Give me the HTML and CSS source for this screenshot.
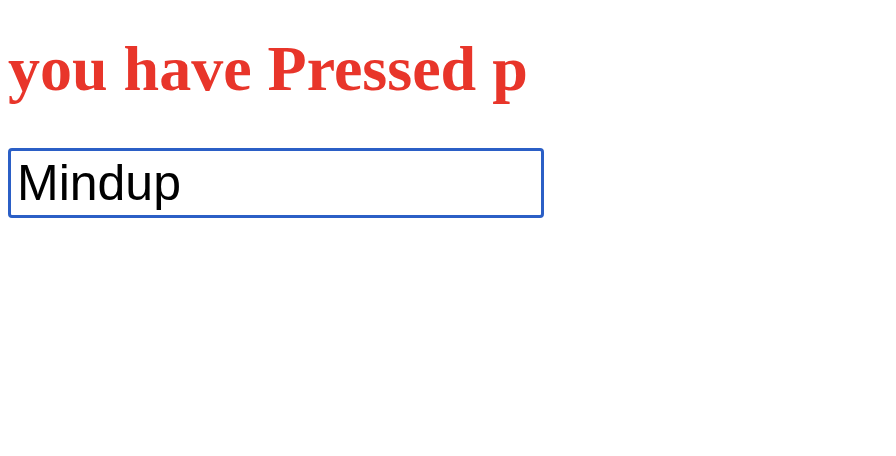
FILE: index.html
```html
<!DOCTYPE html>
<html>
<head>
<meta charset="utf-8">
<link rel="stylesheet" href="styles.css">
</head>
<body>
<h1 class="title">you have Pressed p</h1>
<input class="field" type="text" value="Mindup">
</body>
</html>
```
FILE: styles.css
```css
body {
  margin: 8px;
  font-family: "Liberation Serif", serif;
  background: #fff;
}
.title {
  color: #e8352a;
  font-family: "Liberation Serif", serif;
  font-weight: bold;
  font-size: 64px;
  line-height: 1.15;
  margin: 0 0 42px;
  padding-top: 24px;
}
.field {
  display: block;
  box-sizing: border-box;
  width: 536px;
  height: 70px;
  border: 3px solid #2b5fc6;
  border-radius: 4px;
  padding: 0 6px;
  font-family: "Liberation Sans", Arial, sans-serif;
  font-size: 50px;
  color: #000;
  outline: none;
}
```
